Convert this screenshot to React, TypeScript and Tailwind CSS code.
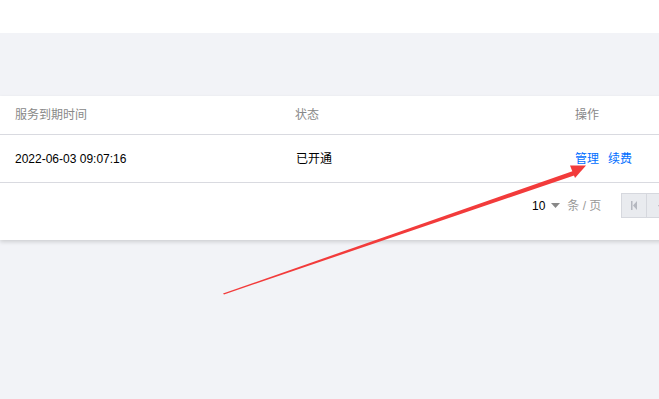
import React from "react";

export default function App() {
  const font = { fontFamily: '"Liberation Sans", "Noto Sans CJK SC", sans-serif' };
  return (
    <div className="relative w-[659px] h-[399px] overflow-hidden bg-[#f2f3f7]" style={font}>
      <div className="h-[33px] bg-white" />
      <div className="h-[63px]" />
      <div className="w-[760px] bg-white shadow-[0_2px_4px_rgba(0,0,0,0.15)]">
        <div className="flex h-[39px] items-center border-b border-[#d9dae0] text-[12px] text-[#888]">
          <div className="w-[280px] pl-[15px]">服务到期时间</div>
          <div className="w-[280px] pl-[15px]">状态</div>
          <div className="w-[200px] pl-[15px]">操作</div>
        </div>
        <div className="flex h-[48px] items-center border-b border-[#d9dae0] text-[12px] text-black">
          <div className="w-[280px] pl-[15px]">2022-06-03 09:07:16</div>
          <div className="w-[280px] pl-[16px]">已开通</div>
          <div className="flex w-[200px] gap-[9px] pl-[15px] text-[#006eff]">
            <span>管理</span>
            <span>续费</span>
          </div>
        </div>
        <div className="flex h-[57px] items-start pl-[532px] pt-[10px]">
          <div className="flex h-[25px] items-center text-[12px]">
            <span className="text-black">10</span>
            <svg width="9" height="5" viewBox="0 0 9 5" className="ml-[6px]">
              <path d="M0 0 L9 0 L4.5 5 Z" fill="#888" />
            </svg>
            <span className="ml-[7px] text-[#999]">条 / 页</span>
          </div>
          <div className="ml-[20px] flex h-[25px]">
            <div className="flex h-[25px] w-[26px] items-center justify-center border border-[#d6d8de] bg-[#e9ebef]">
              <svg width="8" height="9" viewBox="0 0 8 9">
                <rect x="1" y="0" width="1.5" height="9" fill="#b5b8c0" />
                <path d="M7 0 L7 9 L3 4.5 Z" fill="#b5b8c0" />
              </svg>
            </div>
            <div className="flex h-[25px] w-[26px] items-center justify-center border border-l-0 border-[#d6d8de] bg-[#e9ebef]">
              <svg width="8" height="9" viewBox="0 0 8 9">
                <path d="M6 0 L6 9 L2 4.5 Z" fill="#b5b8c0" />
              </svg>
            </div>
          </div>
        </div>
      </div>
      <svg className="pointer-events-none absolute left-0 top-0" width="659" height="399" viewBox="0 0 659 399">
        <path d="M223 293.5 L576 170 L577 174.5 L224 294.5 Z" fill="#f23b3b" />
        <path d="M586 165.5 L570 165.5 L575 178 Z" fill="#f23b3b" />
      </svg>
    </div>
  );
}
